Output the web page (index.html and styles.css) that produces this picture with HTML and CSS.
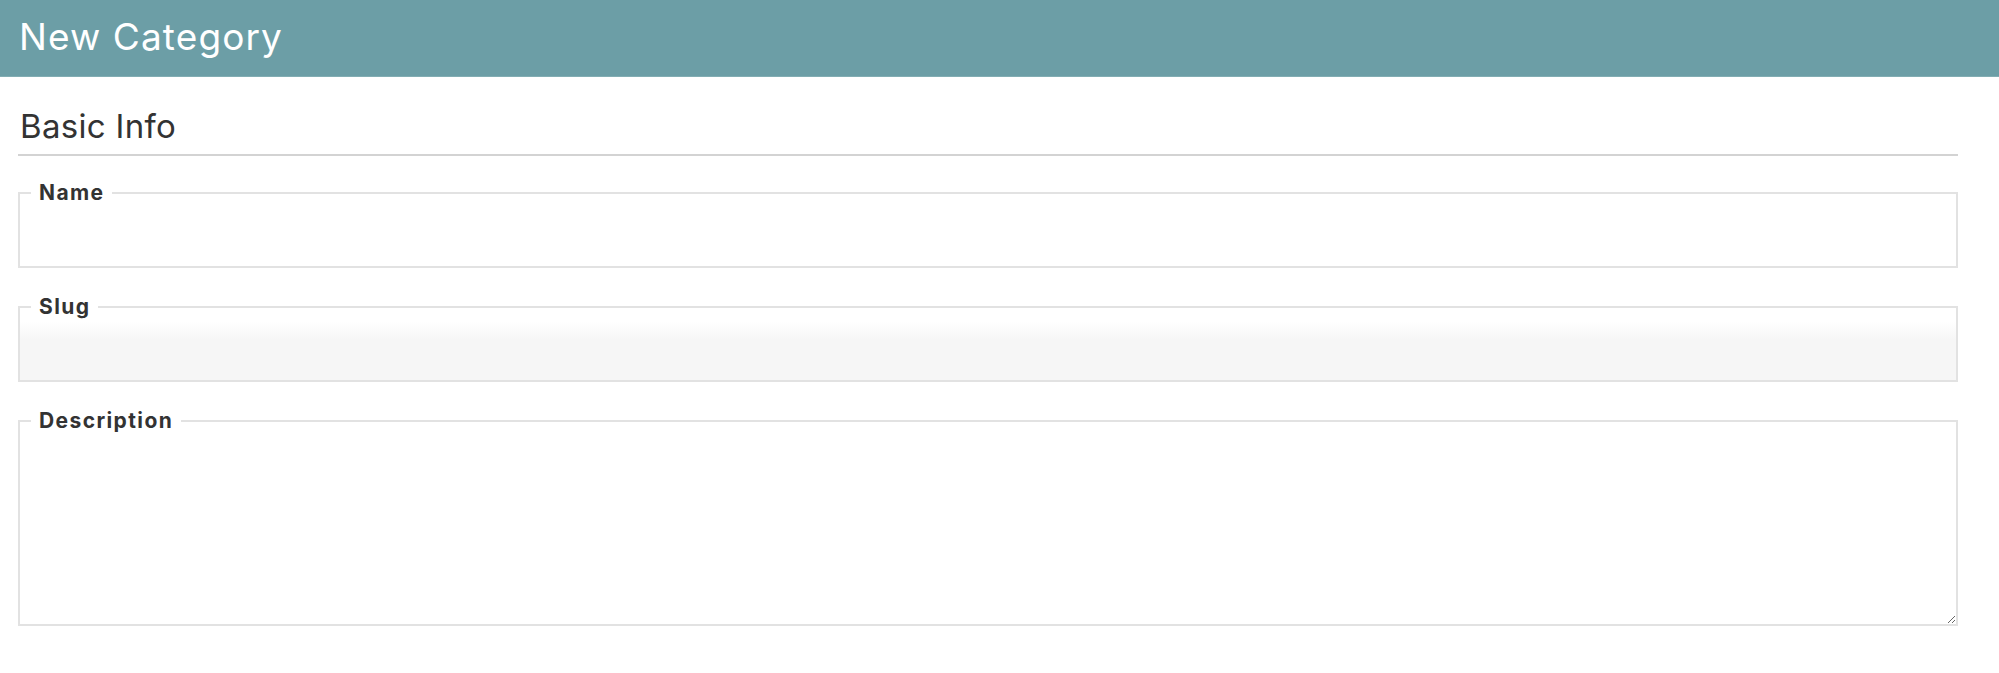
FILE: index.html
```html
<!DOCTYPE html>
<html lang="en">
<head>
<meta charset="utf-8">
<title>New Category</title>
<link rel="stylesheet" href="styles.css">
</head>
<body>
<header class="topbar">
  <h1 class="topbar-title">New Category</h1>
</header>
<main class="content">
  <h2 class="section-title">Basic Info</h2>
  <form class="form">
    <fieldset class="field">
      <legend class="field-label">Name</legend>
      <input class="field-input" type="text">
    </fieldset>
    <fieldset class="field">
      <legend class="field-label">Slug</legend>
      <input class="field-input field-input--readonly" type="text" readonly>
    </fieldset>
    <fieldset class="field">
      <legend class="field-label">Description</legend>
      <textarea class="field-textarea"></textarea>
    </fieldset>
  </form>
</main>
</body>
</html>
```
FILE: styles.css
```css
* { box-sizing: border-box; }
html, body { margin: 0; padding: 0; background: #fff; }
body {
  font-family: Inter, "Open Sans", "Liberation Sans", sans-serif;
  color: #333;
}
.topbar {
  height: 77px;
  background: #6c9ea6;
  border-bottom: 1px solid #82adb3;
  display: flex;
  align-items: center;
  padding-left: 19px;
  padding-bottom: 4px;
}
.topbar-title {
  margin: 0;
  font-size: 37px;
  font-weight: 400;
  color: #fff;
  line-height: 1;
  letter-spacing: 1.1px;
}
.content {
  margin-left: 18px;
  width: 1940px;
  padding-top: 29px;
}
.section-title {
  margin: 0;
  padding-left: 2px;
  font-size: 33px;
  font-weight: 400;
  line-height: 40px;
  color: #333;
  letter-spacing: 0.3px;
  padding-bottom: 8px;
  border-bottom: 2px solid #d3d3d3;
}
.form {
  display: flex;
  flex-direction: column;
  gap: 27px;
  padding-top: 25px;
}
.field {
  margin: 0;
  padding: 0 0 0 11px;
  border: 2px solid #e2e2e2;
  background: #fff;
  min-width: 0;
}
.field-label {
  padding: 0 8px;
  font-size: 21px;
  font-weight: 700;
  line-height: 24px;
  letter-spacing: 1.4px;
  color: #333;
}
.field-input {
  display: block;
  width: calc(100% + 11px);
  margin-left: -11px;
  height: 61px;
  border: 0;
  outline: none;
  background: transparent;
  font: inherit;
}
.field-input--readonly {
  background: linear-gradient(to bottom, #fff 0, #fff 2px, #f6f6f6 20px, #f6f6f6 100%);
}
.field-textarea {
  display: block;
  width: calc(100% + 11px);
  margin-left: -11px;
  height: 191px;
  border: 0;
  outline: none;
  resize: vertical;
  background: transparent;
  font: inherit;
}
```
